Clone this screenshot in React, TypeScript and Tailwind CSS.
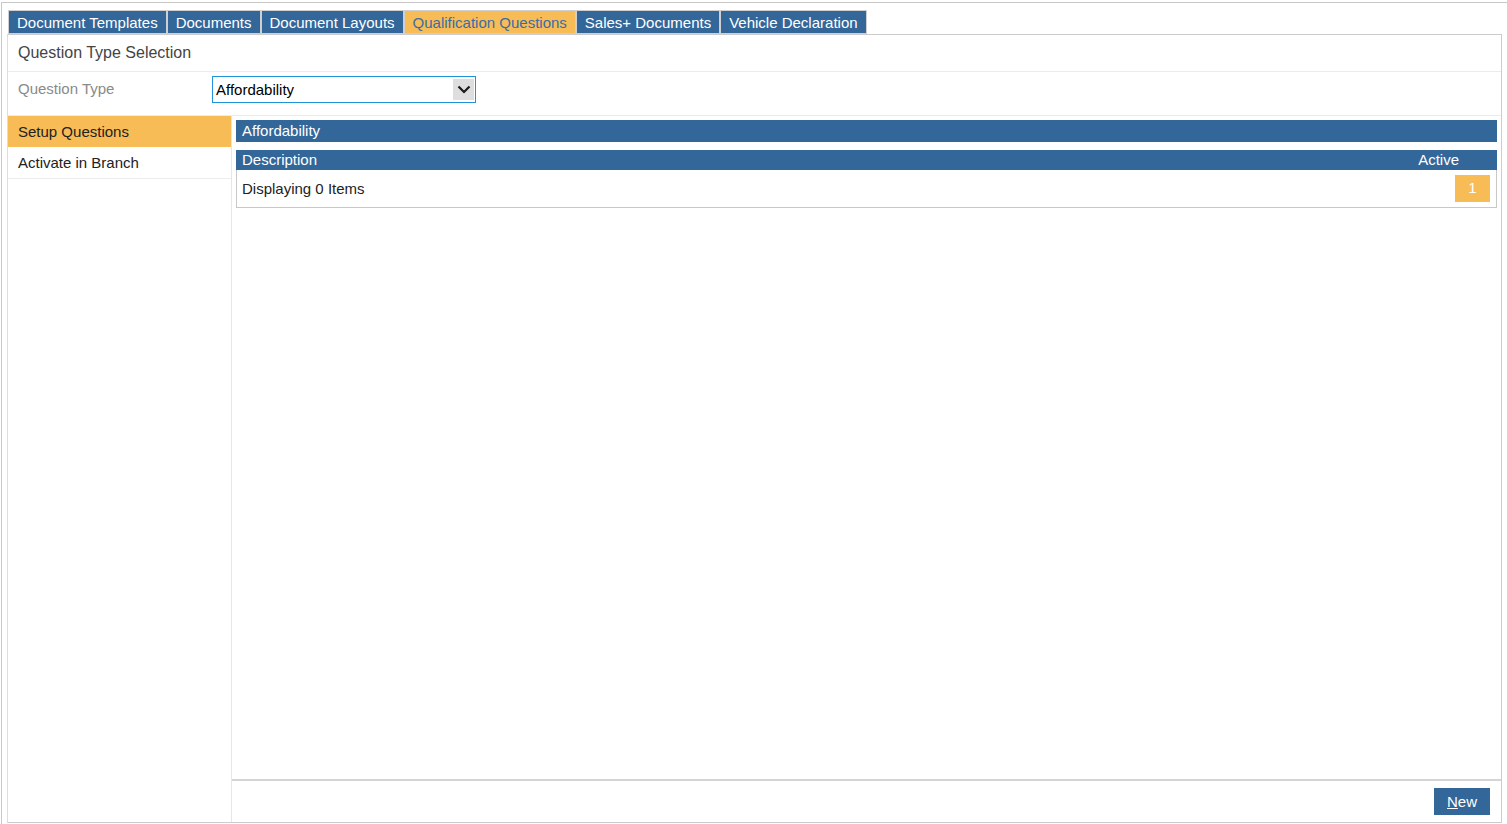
import React from "react";

const tabs = [
  "Document Templates",
  "Documents",
  "Document Layouts",
  "Qualification Questions",
  "Sales+ Documents",
  "Vehicle Declaration",
];

const ACTIVE_TAB = "Qualification Questions";

export default function App() {
  return (
    <div
      className="flex h-[824px] w-full flex-col bg-white pl-[1px] pt-[2px] text-[15px] text-[#222]"
      style={{ fontFamily: '"Liberation Sans", Arial, sans-serif' }}
    >
      <div className="flex flex-1 flex-col border-l border-t border-[#c8c8c8] pb-[1px] pl-[5px] pr-[5px] pt-[7px]">
        {/* Tabs */}
        <div className="flex pl-[1px]">
          {tabs.map((tab) => (
            <div
              key={tab}
              className={
                tab === ACTIVE_TAB
                  ? "flex h-[24px] items-center border border-[#cfcfcf] bg-[#f7bc55] px-[8px] pt-[2px] text-[#3a6ea5]"
                  : "flex h-[24px] items-center border border-[#cfcfcf] bg-[#336699] px-[8px] pt-[2px] text-white"
              }
            >
              {tab}
            </div>
          ))}
        </div>

        {/* Panel */}
        <div className="flex flex-1 flex-col border border-[#cccccc] border-l-[#dddddd]">
          <div className="flex h-[37px] items-center border-b border-[#ececec] pl-[10px] text-[16px] text-[#444]">
            Question Type Selection
          </div>

          <div className="flex h-[44px] items-start border-b border-[#ececec] pl-[10px] pt-[4px]">
            <div className="flex h-[27px] w-[194px] items-center text-[#8a8a8a]">Question Type</div>
            <div className="flex h-[27px] w-[264px] items-center justify-between border border-[#1f94dc] pl-[3px] pr-[1px] text-black">
              <span className="pt-[1px]">Affordability</span>
              <div className="flex h-[21px] w-[21px] items-center justify-center bg-[#dedede]">
                <svg width="14" height="9" viewBox="0 0 14 9">
                  <path d="M1.5 1.5 L7 7 L12.5 1.5" fill="none" stroke="#1a1a1a" strokeWidth="2.2" />
                </svg>
              </div>
            </div>
          </div>

          <div className="flex flex-1">
            {/* Left nav */}
            <div className="flex w-[224px] flex-col border-r border-[#e6e6e6]">
              <div className="flex h-[31px] items-center bg-[#f7bc55] pl-[10px] pt-[1px] text-[#222]">
                Setup Questions
              </div>
              <div className="flex h-[32px] items-center border-b border-[#ececec] pl-[10px] pt-[1px] text-[#222]">
                Activate in Branch
              </div>
            </div>

            {/* Right content */}
            <div className="flex flex-1 flex-col">
              <div className="flex-1 p-[4px]">
                <div className="flex h-[22px] items-center bg-[#336699] pl-[6px] pt-[1px] text-white">
                  Affordability
                </div>
                <div className="mt-[8px] flex h-[20px] items-center justify-between bg-[#336699] pl-[6px] pr-[38px] pt-[1px] text-white">
                  <span>Description</span>
                  <span>Active</span>
                </div>
                <div className="flex h-[38px] items-center justify-between border border-t-0 border-[#c8c8c8] pl-[5px] pr-[6px]">
                  <span className="pt-[2px]">Displaying 0 Items</span>
                  <div className="flex h-[27px] w-[35px] items-center justify-center bg-[#f7bc55] text-white">
                    1
                  </div>
                </div>
              </div>

              <div className="flex h-[43px] items-center justify-end border-t-2 border-[#d4d4d4] pr-[11px]">
                <button className="flex h-[27px] w-[56px] items-center justify-center bg-[#336699] pt-[2px] text-white">
                  <span>
                    <span className="underline">N</span>ew
                  </span>
                </button>
              </div>
            </div>
          </div>
        </div>
      </div>
    </div>
  );
}
